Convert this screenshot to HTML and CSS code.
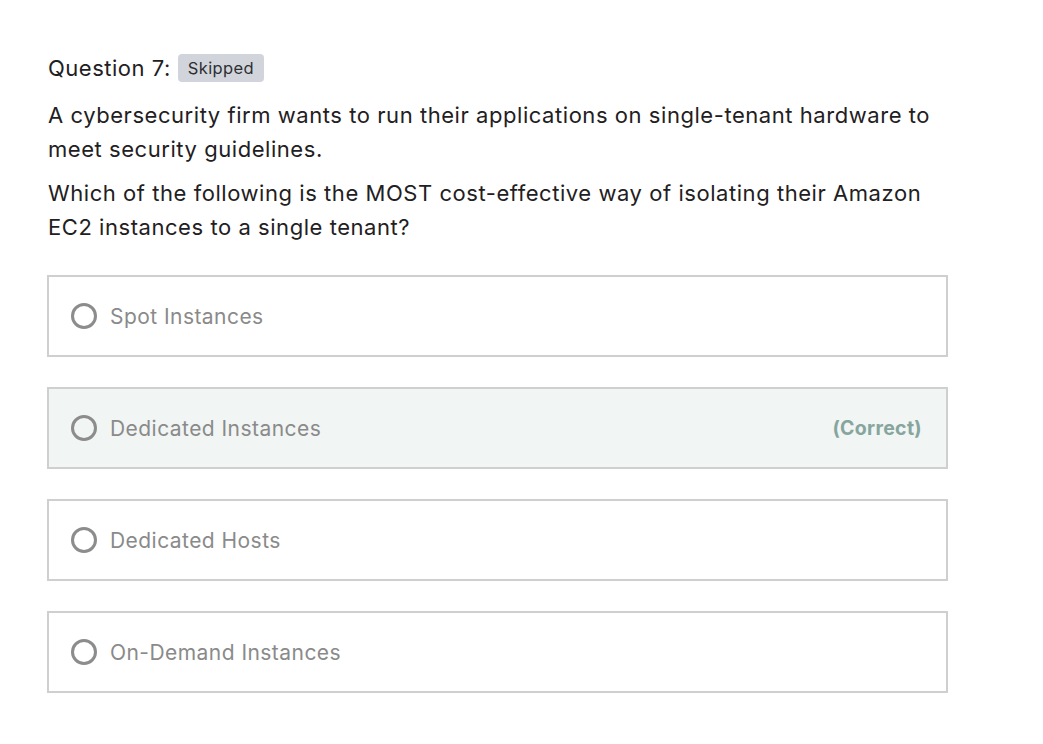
FILE: index.html
```html
<!DOCTYPE html>
<html>
<head>
<meta charset="utf-8">
<link rel="stylesheet" href="styles.css">
</head>
<body>
<div class="page">
  <div class="q-head">
    <span class="q-title">Question 7:</span>
    <span class="badge">Skipped</span>
  </div>
  <div class="q-body">
    <p>A cybersecurity firm wants to run their applications on single-tenant hardware to meet security guidelines.</p>
    <p>Which of the following is the MOST cost-effective way of isolating their Amazon EC2 instances to a single tenant?</p>
  </div>
  <ul class="options">
    <li class="option"><span class="radio"></span><span class="label">Spot Instances</span></li>
    <li class="option correct"><span class="radio"></span><span class="label">Dedicated Instances</span><span class="tag">(Correct)</span></li>
    <li class="option"><span class="radio"></span><span class="label">Dedicated Hosts</span></li>
    <li class="option"><span class="radio"></span><span class="label">On-Demand Instances</span></li>
  </ul>
</div>
</body>
</html>
```
FILE: styles.css
```css
* { box-sizing: border-box; }
html, body { margin: 0; padding: 0; background: #fff; }
body {
  font-family: Inter, "Noto Sans", sans-serif;
  color: #1f2022;
}
.page {
  padding: 52px 0 0 48px;
  width: 948px;
}
.q-head {
  display: flex;
  align-items: center;
  gap: 7px;
  height: 32px;
}
.q-title {
  font-size: 22px;
  letter-spacing: 0.5px;
}
.badge {
  background: #d1d5db;
  color: #2d2f31;
  font-size: 16.5px;
  letter-spacing: 0.4px;
  border-radius: 4px;
  padding: 0 10px;
  height: 28px;
  line-height: 28px;
}
.q-body { margin-top: 14px; }
.q-body p {
  margin: 0 0 10px 0;
  font-size: 22px;
  line-height: 34px;
  letter-spacing: 0.55px;
}
.options {
  list-style: none;
  margin: 0;
  padding: 0;
  margin-top: 31px;
  margin-left: -1px;
  display: flex;
  flex-direction: column;
  gap: 30px;
}
.option {
  height: 82px;
  border: 2px solid #cfcfcf;
  display: flex;
  align-items: center;
  padding: 0 24px 0 22px;
}
.option.correct { background: #f1f5f4; }
.radio {
  width: 26px;
  height: 26px;
  border: 3px solid #8c8c8c;
  border-radius: 50%;
  flex: none;
}
.label {
  margin-left: 13px;
  font-size: 21px;
  letter-spacing: 0.45px;
  color: #8a8a8a;
  flex: 1;
}
.tag {
  font-size: 19.5px;
  font-weight: 700;
  letter-spacing: 0.3px;
  color: #86a69d;
}
```
